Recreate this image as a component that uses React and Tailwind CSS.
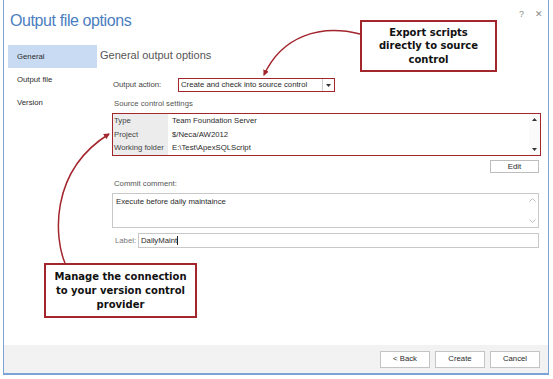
import React from "react";

const red = "#a3262d";

function Chevron({ up }) {
  return (
    <svg width="7" height="4" viewBox="0 0 7 4" className="block">
      <path d={up ? "M0.5 3.5 L3.5 0.5 L6.5 3.5" : "M0.5 0.5 L3.5 3.5 L6.5 0.5"} fill="none" stroke="#b5b5b5" strokeWidth="0.9" />
    </svg>
  );
}

function Tri({ up }) {
  return (
    <svg width="5" height="3" viewBox="0 0 5 3" className="block">
      <path d={up ? "M0 3 L2.5 0 L5 3 Z" : "M0 0 L2.5 3 L5 0 Z"} fill="#333" />
    </svg>
  );
}

const rows = [
  ["Type", "Team Foundation Server"],
  ["Project", "$/Neca/AW2012"],
  ["Working folder", "E:\\Test\\ApexSQLScript"],
];

export default function App() {
  return (
    <div className="relative w-[553px] h-[379px] overflow-hidden bg-white font-['Liberation_Sans',Arial,sans-serif] text-[#2b2b2b]">
      {/* dialog window */}
      <div className="ml-[3px] w-[546px] h-[375px] border-x border-b-2 border-[#7ca3d6] flex flex-col">
        <div className="h-[45px] flex justify-between">
          <div className="pl-[6px] pt-[11px] text-[16px] leading-[20px] tracking-[-0.4px] text-[#4a7ebf]">
            Output file options
          </div>
          <div className="flex gap-[11px] pt-[8px] pr-[5px] text-[9px] text-[#888]">
            <span>?</span>
            <span>✕</span>
          </div>
        </div>

        <div className="flex-1 flex">
          {/* sidebar */}
          <div className="w-[96px] pl-[4px] text-[7.75px]">
            <div className="w-[89px] h-[23px] pl-[9px] flex items-center bg-[#c8dbf3]">General</div>
            <div className="w-[89px] h-[23px] pl-[9px] flex items-center">Output file</div>
            <div className="w-[89px] h-[23px] pl-[9px] flex items-center">Version</div>
          </div>

          {/* main */}
          <div className="w-[441px] text-[7.75px]">
            <div className="h-[20px] leading-[20px] text-[11px] text-[#555]">General output options</div>

            <div className="pl-[12px]">
              <div className="mt-[13px] flex items-center">
                <div className="w-[66px] pl-[1px] text-[#444]">Output action:</div>
                <div className="w-[157px] h-[14px] border-[1.5px] border-[#a3262d] flex items-center">
                  <div className="flex-1 pl-[2px]">Create and check into source control</div>
                  <div className="w-[12px] h-full border-l border-[#ccc] flex items-center justify-center">
                    <Tri />
                  </div>
                </div>
              </div>

              <div className="mt-[7px] pl-[2px] leading-[10px] text-[#555]">Source control settings</div>

              <div className="mt-[4px] w-[429px] h-[43px] border-[1.5px] border-[#a3262d] flex">
                <div className="flex-1 flex flex-col">
                  {rows.map(([k, v]) => (
                    <div key={k} className="flex-1 flex">
                      <div className="w-[55px] bg-[#ececec] pl-[1px] flex items-center text-[#444]">{k}</div>
                      <div className="flex-1 pl-[4px] flex items-center">{v}</div>
                    </div>
                  ))}
                </div>
                <div className="w-[11px] flex flex-col justify-between items-center py-[4px] bg-[#fafafa]">
                  <Tri up />
                  <Tri />
                </div>
              </div>

              <div className="mt-[4px] w-[427px] flex justify-end">
                <div className="w-[49px] h-[13px] border border-[#bdbdbd] bg-white flex items-center justify-center">
                  Edit
                </div>
              </div>

              <div className="mt-[6px] pl-[2px] leading-[10px] text-[#555]">Commit comment:</div>

              <div className="mt-[4px] w-[427px] h-[35px] border border-[#c8c8c8] flex">
                <div className="flex-1 pl-[3px] pt-[2px]">Execute before daily maintaince</div>
                <div className="w-[11px] flex flex-col justify-between items-center py-[4px]">
                  <Chevron up />
                  <Chevron />
                </div>
              </div>

              <div className="mt-[5px] flex items-center">
                <div className="w-[26px] pl-[3px] text-[#777]">Label:</div>
                <div className="w-[401px] h-[15px] border border-[#c8c8c8] flex items-center pl-[2px]">
                  DailyMaint
                  <span className="w-px h-[9px] bg-[#222]" />
                </div>
              </div>
            </div>
          </div>
        </div>

        {/* footer */}
        <div className="h-[28px] bg-[#f2f2f2] flex items-center justify-end gap-[5px] pr-[8px] text-[7.75px]">
          <div className="w-[50px] h-[17px] border border-[#c4c4c4] bg-white flex items-center justify-center">&lt; Back</div>
          <div className="w-[50px] h-[17px] border border-[#c4c4c4] bg-white flex items-center justify-center">Create</div>
          <div className="w-[50px] h-[17px] border border-[#c4c4c4] bg-white flex items-center justify-center">Cancel</div>
        </div>
      </div>

      {/* callout arrows */}
      <svg className="absolute left-0 top-0 pointer-events-none" width="553" height="379" viewBox="0 0 553 379">
        <defs>
          <marker id="ah" markerWidth="6" markerHeight="6" refX="5" refY="3" orient="auto" markerUnits="userSpaceOnUse">
            <path d="M0 0 L6 3 L0 6 Z" fill={red} />
          </marker>
        </defs>
        <path d="M360 34 C 320 24 282 36 264 75" fill="none" stroke={red} strokeWidth="1.5" markerEnd="url(#ah)" />
        <path d="M65 263 C 55 240 48 172 109 134" fill="none" stroke={red} strokeWidth="1.5" markerEnd="url(#ah)" />
      </svg>

      <div className="absolute left-[360px] top-[20px] w-[137px] h-[52px] border-2 border-[#a3262d] bg-white flex items-center justify-center text-center font-['DejaVu_Sans',sans-serif] font-bold text-[10px] leading-[13.5px] text-[#111]">
        Export scripts
        <br />
        directly to source
        <br />
        control
      </div>

      <div className="absolute left-[44px] top-[263px] w-[153px] h-[55px] border-2 border-[#a3262d] bg-white flex items-center justify-center text-center font-['DejaVu_Sans',sans-serif] font-bold text-[10px] leading-[14px] text-[#111]">
        Manage the connection
        <br />
        to your version control
        <br />
        provider
      </div>
    </div>
  );
}
